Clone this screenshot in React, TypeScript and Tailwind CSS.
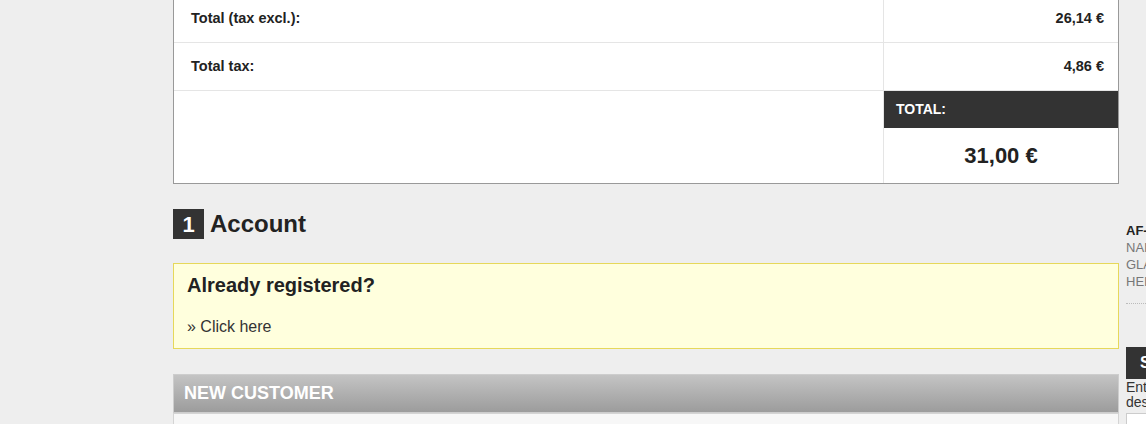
export default function App() {
  return (
    <div
      className="w-[1146px] h-[424px] overflow-hidden bg-[#eeeeee] text-[#222]"
      style={{ fontFamily: '"Liberation Sans", Arial, sans-serif' }}
    >
      <div className="flex items-start pl-[173px] gap-[7px]">
        {/* Main column */}
        <div className="w-[946px] shrink-0 flex flex-col">
          {/* Cart totals */}
          <div className="mt-[-5px] bg-white border-x border-b border-[#999]">
            <div className="flex h-[48px] border-b border-[#e5e5e5]">
              <div className="w-[709px] flex items-center pl-[17px] text-[14.5px] font-bold">
                Total (tax excl.):
              </div>
              <div className="flex-1 flex items-center justify-end pr-[14px] border-l border-[#e5e5e5] text-[14.5px] font-bold">
                26,14 €
              </div>
            </div>
            <div className="flex h-[48px] border-b border-[#e5e5e5]">
              <div className="w-[709px] flex items-center pl-[17px] text-[14.5px] font-bold">
                Total tax:
              </div>
              <div className="flex-1 flex items-center justify-end pr-[14px] border-l border-[#e5e5e5] text-[14.5px] font-bold">
                4,86 €
              </div>
            </div>
            <div className="flex h-[92px]">
              <div className="w-[709px]" />
              <div className="flex-1 flex flex-col border-l border-[#e5e5e5]">
                <div className="h-[37px] bg-[#333] text-white flex items-center pl-[12px] text-[14px] font-bold">
                  TOTAL:
                </div>
                <div className="flex-1 flex items-center justify-center text-[22px] font-bold">
                  31,00 €
                </div>
              </div>
            </div>
          </div>

          {/* Step heading */}
          <div className="mt-[25px] flex items-center gap-[6px]">
            <span className="w-[31px] h-[30px] bg-[#333] text-white flex items-center justify-center text-[22px] font-bold">
              1
            </span>
            <h2 className="text-[24px] font-bold leading-none">Account</h2>
          </div>

          {/* Already registered */}
          <div className="mt-[24px] h-[86px] bg-[#ffffdd] border border-[#e6d85a] pl-[13px] pt-[7px]">
            <h3 className="text-[20px] font-bold leading-[28px]">Already registered?</h3>
            <p className="mt-[18px] text-[16px] leading-[20px] text-[#333]">» Click here</p>
          </div>

          {/* New customer */}
          <div className="mt-[25px] h-[39px] border border-[#cdcdcd] bg-gradient-to-b from-[#c4c4c4] to-[#9c9c9c] flex items-center pl-[10px]">
            <span className="text-white text-[18px] font-bold uppercase">New customer</span>
          </div>
          <div className="h-[40px] bg-[#f7f7f7] border-x border-t border-[#d4d4d4]" />
        </div>

        {/* Sidebar */}
        <div className="w-[220px] shrink-0 pt-[222px] flex flex-col">
          <div className="text-[13px] leading-[17px] pb-[13px] border-b border-dotted border-[#bbb]">
            <p className="font-bold text-[#222] whitespace-nowrap">AF-2304 Vase</p>
            <p className="text-[#777] whitespace-nowrap">NAIL</p>
            <p className="text-[#777] whitespace-nowrap">GLAZE</p>
            <p className="text-[#777] whitespace-nowrap">HEIGHT 20 CM</p>
          </div>
          <div className="mt-[43px] h-[32px] bg-[#333] text-white flex items-center pl-[14px] text-[16px] font-bold uppercase">
            Search
          </div>
          <p className="text-[14px] leading-[15px] text-[#333] mt-px w-[180px]">
            Enter a product name or description
          </p>
          <div className="mt-[3px] h-[24px] bg-white border border-[#ccc]" />
        </div>
      </div>
    </div>
  );
}
